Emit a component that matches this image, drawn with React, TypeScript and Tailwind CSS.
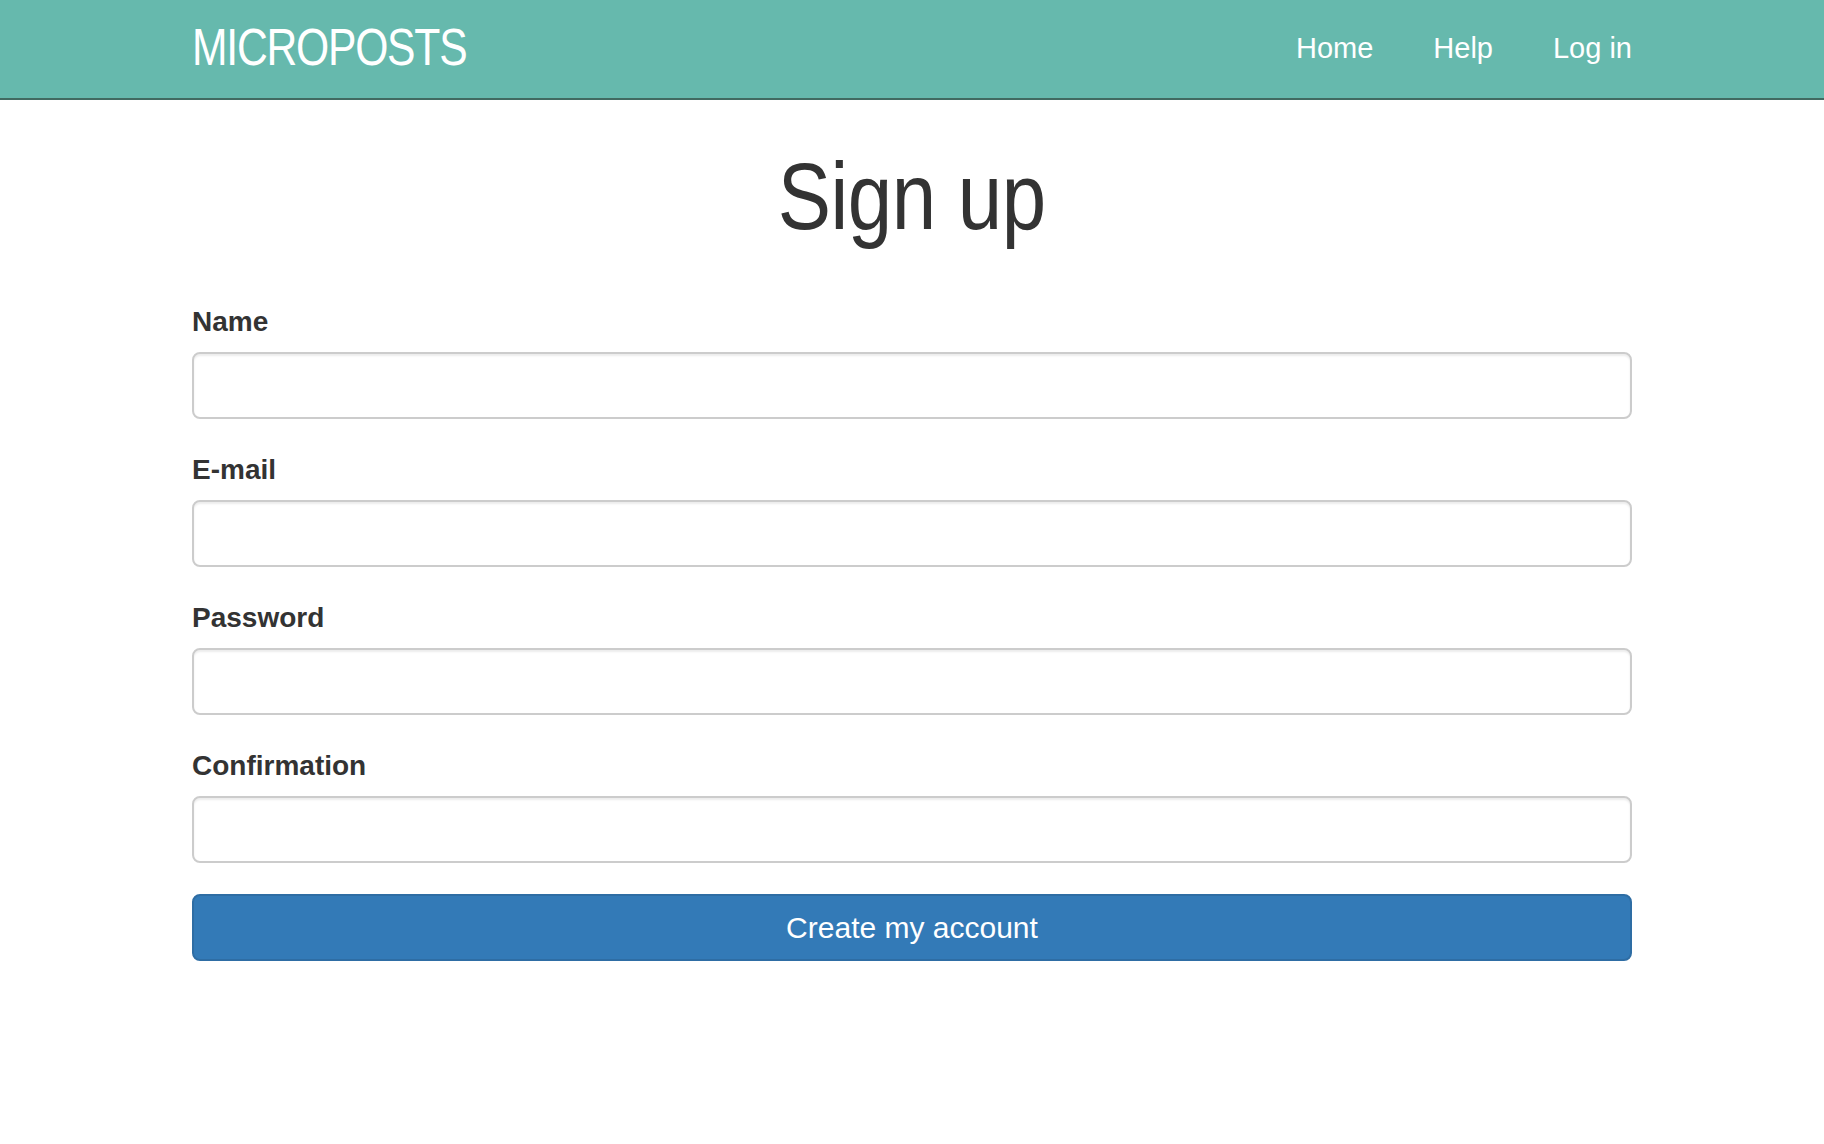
import React from 'react';

const fields = [
  { id: 'name', label: 'Name', type: 'text' },
  { id: 'email', label: 'E-mail', type: 'email' },
  { id: 'password', label: 'Password', type: 'password' },
  { id: 'confirmation', label: 'Confirmation', type: 'password' },
];

const Header: React.FC = () => {
  return (
    <header className="h-[100px] bg-[#66b9ad] border-b-2 border-[#416a61]">
      <div className="mx-auto w-[1440px] h-[98px] flex items-center justify-between">
        {/* condensed logo: Arial squeezed horizontally */}
        <a
          href="#"
          className="inline-block origin-left scale-x-[0.82] text-white text-[52px] leading-none tracking-[-1.5px] uppercase pb-[4px]"
        >
          microposts
        </a>
        <nav className="flex items-center gap-[60px] text-white text-[29px]">
          <a href="#">Home</a>
          <a href="#">Help</a>
          <a href="#">Log in</a>
        </nav>
      </div>
    </header>
  );
};

export default function App() {
  return (
    <div className="min-h-[1144px] bg-white font-['Liberation_Sans',Arial,sans-serif] text-[#333]">
      <Header />
      <main className="mx-auto w-[1440px]">
        <h1 className="mt-[45px] text-center text-[94px] leading-[104px] text-[#333]">
          <span className="inline-block scale-x-[0.85] tracking-[-0.5px]">Sign up</span>
        </h1>
        <form className="mt-[53px] flex flex-col" onSubmit={(e) => e.preventDefault()}>
          {fields.map((f) => (
            <div key={f.id} className="flex flex-col mb-[31px]">
              <label htmlFor={f.id} className="h-[40px] leading-[40px] text-[28px] font-bold mb-[10px] text-[#333]">
                {f.label}
              </label>
              <input
                id={f.id}
                type={f.type}
                className="h-[67px] w-full rounded-[8px] border-2 border-[#cccccc] bg-white px-4 text-[28px] shadow-[inset_0_2px_2px_rgba(0,0,0,0.075)] outline-none"
              />
            </div>
          ))}
          <button
            type="submit"
            className="h-[67px] w-full rounded-[8px] border-2 border-[#2e6da4] bg-[#337ab7] text-white text-[30px]"
          >
            Create my account
          </button>
        </form>
      </main>
    </div>
  );
}
